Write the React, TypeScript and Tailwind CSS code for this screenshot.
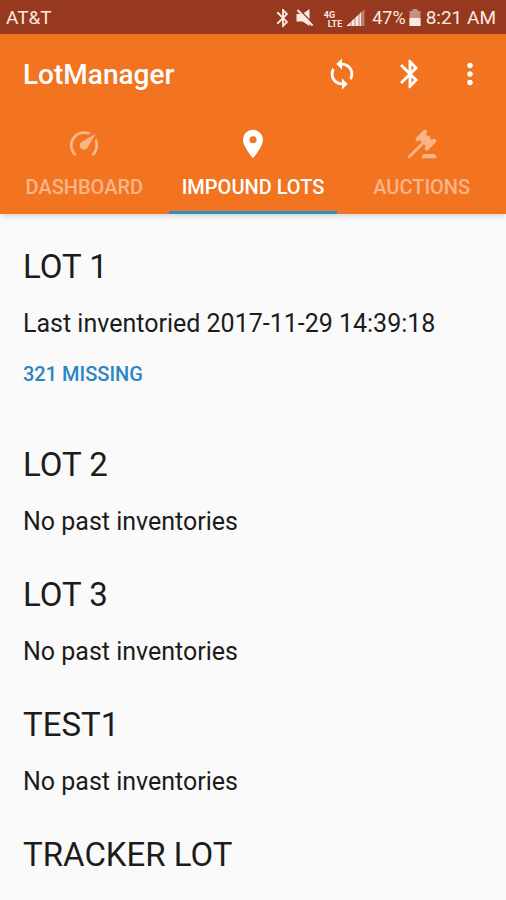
import { useState } from 'react';
import { MdBluetooth, MdMoreVert, MdPlace, MdSync } from 'react-icons/md';

interface Lot {
  name: string;
  status: string;
  missing?: number;
}

const lots: Lot[] = [
  { name: 'LOT 1', status: 'Last inventoried 2017-11-29 14:39:18', missing: 321 },
  { name: 'LOT 2', status: 'No past inventories' },
  { name: 'LOT 3', status: 'No past inventories' },
  { name: 'TEST1', status: 'No past inventories' },
  { name: 'TRACKER LOT', status: '' },
];

const iconButtonClasses = 'flex h-12 w-11 items-center justify-center cursor-pointer';
const tabClasses = 'flex flex-1 flex-col items-center gap-3.5 border-b-3 pt-[13px] pb-3 text-xl leading-6 font-medium whitespace-nowrap cursor-pointer';

function GaugeIcon() {
  return (
    <svg viewBox="0 0 24 24" className="size-8.5" fill="currentColor" aria-hidden="true">
      <path d="M12,16A3,3 0 0,1 9,13C9,11.88 9.61,10.9 10.5,10.39L20.21,4.77L14.68,14.35C14.18,15.33 13.17,16 12,16M12,3C13.81,3 15.5,3.5 16.97,4.32L14.87,5.53C14,5.19 13,5 12,5A8,8 0 0,0 4,13C4,15.21 4.89,17.21 6.34,18.65H6.35C6.74,19.04 6.74,19.67 6.35,20.06C5.96,20.45 5.32,20.45 4.93,20.07V20.07C3.12,18.26 2,15.76 2,13A10,10 0 0,1 12,3M22,13C22,15.76 20.88,18.26 19.07,20.07V20.07C18.68,20.45 18.05,20.45 17.66,20.06C17.27,19.67 17.27,19.04 17.66,18.65V18.65C19.11,17.2 20,15.21 20,13C20,12 19.81,11 19.46,10.1L20.67,8C21.5,9.5 22,11.18 22,13Z" />
    </svg>
  );
}

function GavelIcon() {
  return (
    <svg viewBox="0 0 24 24" className="size-8.5" fill="currentColor" aria-hidden="true">
      <path d="M2.3,20.28L11.9,10.68L10.5,9.26L9.78,9.97C9.39,10.36 8.76,10.36 8.37,9.97L7.66,9.26C7.27,8.87 7.27,8.24 7.66,7.85L13.32,2.19C13.71,1.8 14.34,1.8 14.73,2.19L15.44,2.9C15.83,3.29 15.83,3.92 15.44,4.31L14.73,5L16.15,6.43C16.54,6.04 17.17,6.04 17.56,6.43C17.95,6.82 17.95,7.46 17.56,7.85L18.97,9.26L19.68,8.55C20.07,8.16 20.71,8.16 21.1,8.55L21.8,9.26C22.19,9.65 22.19,10.29 21.8,10.68L16.15,16.33C15.76,16.72 15.12,16.72 14.73,16.33L14.03,15.63C13.63,15.24 13.63,14.6 14.03,14.21L14.73,13.5L13.32,12.09L3.71,21.7C3.32,22.09 2.69,22.09 2.3,21.7C1.91,21.31 1.91,20.67 2.3,20.28M20,19A2,2 0 0,1 22,21V22H12V21A2,2 0 0,1 14,19H20Z" />
    </svg>
  );
}

function MuteIcon() {
  return (
    <svg viewBox="0 0 17 18" className="h-4.5 w-4.5" fill="currentColor" aria-hidden="true">
      <path d="M0 5H6L13 0V17L6 12.5H0Z" />
      <path d="M2 0L17 15" stroke="#96391f" strokeWidth="1.5" />
      <path d="M1 1L16 16.5" stroke="currentColor" strokeWidth="2" />
    </svg>
  );
}

function SignalIcon() {
  return (
    <svg viewBox="0 0 19 18" className="h-4.5 w-5" fill="currentColor" aria-hidden="true">
      <path d="M0 17L18 0V17Z" opacity="0.4" />
      <path d="M0 17L4 13.2V17ZM5 12.3L8 9.5V17H5ZM9 8.5L12 5.7V17H9ZM13 4.7L14.5 3.3V17H13Z" />
    </svg>
  );
}

function BatteryIcon() {
  return (
    <svg viewBox="0 0 13 18" className="h-4.5 w-3.5" fill="currentColor" aria-hidden="true">
      <path d="M4 0H9V2H12V17H1V2H4Z" opacity="0.5" />
      <path d="M1 9H12V17H1Z" />
    </svg>
  );
}

function StatusBar() {
  return (
    <div className="flex h-8.5 items-center justify-between bg-[#96391f] pt-0.5 pr-2.5 pl-1.5 text-[19px] leading-6 text-[#fbe9e4]">
      <span>AT&amp;T</span>
      <div className="flex items-center">
        <MdBluetooth className="size-5.5" stroke="currentColor" />
        <span className="ml-0.5">
          <MuteIcon />
        </span>
        <div className="ml-2.5 flex flex-col pt-1 text-[9px] leading-[9px] font-bold">
          <span>4G</span>
          <span className="pl-1">LTE</span>
        </div>
        <span className="ml-1">
          <SignalIcon />
        </span>
        <span className="ml-1.5 text-lg leading-6">47%</span>
        <span className="mx-0.5">
          <BatteryIcon />
        </span>
        <span className="ml-0.5">8:21 AM</span>
      </div>
    </div>
  );
}

const tabs = [
  { label: 'DASHBOARD', icon: <GaugeIcon /> },
  { label: 'IMPOUND LOTS', icon: <MdPlace className="size-8.5" /> },
  { label: 'AUCTIONS', icon: <GavelIcon /> },
];

export default function App() {
  const [activeTab, setActiveTab] = useState('IMPOUND LOTS');

  return (
    <div className="h-screen overflow-hidden bg-[#fafafa] font-[Roboto,sans-serif] text-[#1c1c1c]">
      <StatusBar />
      <header className="bg-[#f27421] text-white shadow-md">
        <div className="flex h-20 items-center justify-between pr-3.5 pl-[23px]">
          <h1 className="pt-0.5 text-[28px] leading-8 font-medium">LotManager</h1>
          <div className="flex items-center">
            <button type="button" aria-label="Sync" className={iconButtonClasses}>
              <MdSync className="size-8.5" />
            </button>
            <button type="button" aria-label="Bluetooth" className={`${iconButtonClasses} ml-6 mr-4`}>
              <MdBluetooth className="size-8.5" stroke="currentColor" />
            </button>
            <button type="button" aria-label="More options" className={iconButtonClasses}>
              <MdMoreVert className="size-8.5" />
            </button>
          </div>
        </div>
        <nav className="flex" role="tablist">
          {tabs.map((tab) => (
            <button
              key={tab.label}
              type="button"
              role="tab"
              aria-selected={activeTab === tab.label}
              onClick={() => setActiveTab(tab.label)}
              className={`${tabClasses} ${
                activeTab === tab.label ? 'border-[#2f8fc0] text-white' : 'border-transparent text-[#f9b488]'
              }`}
            >
              {tab.icon}
              {tab.label}
            </button>
          ))}
        </nav>
      </header>

      <main className="flex flex-col px-[23px] pt-[33px]">
        {lots.map((lot) => (
          <section key={lot.name} className="mb-[37px]">
            <h2 className="text-[33px] leading-10">{lot.name}</h2>
            {lot.status && <p className="mt-[21px] text-[25px] leading-8">{lot.status}</p>}
            {lot.missing && (
              <button type="button" className="block h-17 text-xl font-medium text-[#2b86c5] cursor-pointer">
                {lot.missing} MISSING
              </button>
            )}
          </section>
        ))}
      </main>
    </div>
  );
}
